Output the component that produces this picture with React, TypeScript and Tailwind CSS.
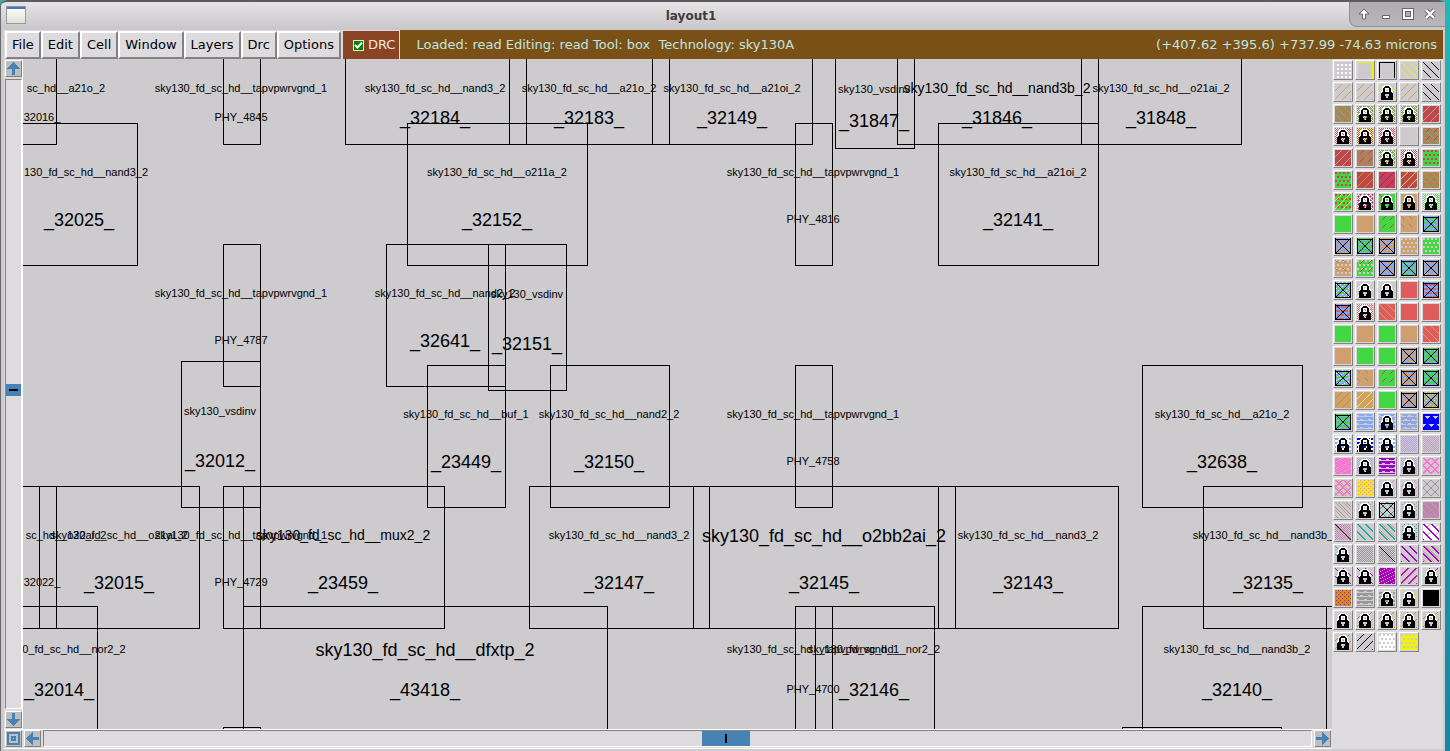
import React from "react";

/* ---------- layout canvas data ---------- */

type Box = [x1: number, y1: number, x2: number, y2: number];
type Size = "s" | "m" | "l";
type Label = [cx: number, cy: number, text: string, size: Size];

const BOXES: Box[] = [
  [-5, -9, 33, 85],
  [200, -9, 237, 85],
  [322, -9, 503, 85],
  [486, -9, 646, 85],
  [629, -9, 789, 85],
  [812, -9, 891, 89],
  [874, -9, 1075, 85],
  [1058, -9, 1218, 85],
  [-5, 64, 114, 206],
  [384, 64, 564, 206],
  [772, 64, 809, 206],
  [915, 64, 1075, 206],
  [200, 185, 237, 327],
  [363, 185, 482, 327],
  [465, 185, 543, 331],
  [158, 302, 237, 448],
  [404, 306, 482, 448],
  [527, 306, 646, 448],
  [772, 306, 809, 448],
  [1119, 306, 1279, 448],
  [-5, 427, 33, 569],
  [16, 427, 176, 569],
  [200, 427, 237, 569],
  [220, 427, 421, 569],
  [506, 427, 686, 569],
  [670, 427, 932, 569],
  [915, 427, 1095, 569],
  [1180, 427, 1361, 569],
  [-5, 547, 74, 689],
  [220, 547, 584, 689],
  [772, 547, 809, 689],
  [792, 547, 911, 689],
  [1119, 547, 1320, 689],
  [1303, 547, 1400, 689],
  [200, 668, 237, 810],
  [1099, 668, 1258, 810],
];

const LABELS: Label[] = [
  [43, 30, "sc_hd__a21o_2", "s"],
  [19, 59, "32016_", "s"],
  [218, 30, "sky130_fd_sc_hd__tapvpwrvgnd_1", "s"],
  [218, 59, "PHY_4845", "s"],
  [412, 30, "sky130_fd_sc_hd__nand3_2", "s"],
  [412, 59, "_32184_", "l"],
  [566, 30, "sky130_fd_sc_hd__a21o_2", "s"],
  [566, 59, "_32183_", "l"],
  [709, 30, "sky130_fd_sc_hd__a21oi_2", "s"],
  [709, 59, "_32149_", "l"],
  [851, 31, "sky130_vsdinv", "s"],
  [851, 62, "_31847_", "l"],
  [974, 29, "sky130_fd_sc_hd__nand3b_2", "m"],
  [974, 59, "_31846_", "l"],
  [1138, 30, "sky130_fd_sc_hd__o21ai_2", "s"],
  [1138, 59, "_31848_", "l"],
  [63, 114, "130_fd_sc_hd__nand3_2", "s"],
  [56, 161, "_32025_", "l"],
  [474, 114, "sky130_fd_sc_hd__o211a_2", "s"],
  [474, 161, "_32152_", "l"],
  [790, 114, "sky130_fd_sc_hd__tapvpwrvgnd_1", "s"],
  [790, 161, "PHY_4816", "s"],
  [995, 114, "sky130_fd_sc_hd__a21oi_2", "s"],
  [995, 161, "_32141_", "l"],
  [218, 235, "sky130_fd_sc_hd__tapvpwrvgnd_1", "s"],
  [218, 282, "PHY_4787", "s"],
  [422, 235, "sky130_fd_sc_hd__nand2_2", "s"],
  [422, 282, "_32641_", "l"],
  [504, 236, "sky130_vsdinv", "s"],
  [504, 285, "_32151_", "l"],
  [197, 353, "sky130_vsdinv", "s"],
  [197, 402, "_32012_", "l"],
  [443, 356, "sky130_fd_sc_hd__buf_1", "s"],
  [443, 403, "_23449_", "l"],
  [586, 356, "sky130_fd_sc_hd__nand2_2", "s"],
  [586, 403, "_32150_", "l"],
  [790, 356, "sky130_fd_sc_hd__tapvpwrvgnd_1", "s"],
  [790, 403, "PHY_4758", "s"],
  [1199, 356, "sky130_fd_sc_hd__a21o_2", "s"],
  [1199, 403, "_32638_", "l"],
  [43, 477, "sc_hd__o22ai_2", "s"],
  [19, 524, "32022_", "s"],
  [96, 477, "sky130_fd_sc_hd__o21ai_2", "s"],
  [96, 524, "_32015_", "l"],
  [218, 477, "sky130_fd_sc_hd__tapvpwrvgnd_1", "s"],
  [218, 524, "PHY_4729", "s"],
  [320, 476, "sky130_fd_sc_hd__mux2_2", "m"],
  [320, 524, "_23459_", "l"],
  [596, 477, "sky130_fd_sc_hd__nand3_2", "s"],
  [596, 524, "_32147_", "l"],
  [801, 477, "sky130_fd_sc_hd__o2bb2ai_2", "l"],
  [801, 524, "_32145_", "l"],
  [1005, 477, "sky130_fd_sc_hd__nand3_2", "s"],
  [1005, 524, "_32143_", "l"],
  [1240, 477, "sky130_fd_sc_hd__nand3b_", "s"],
  [1245, 524, "_32135_", "l"],
  [51, 591, "0_fd_sc_hd__nor2_2", "s"],
  [36, 631, "_32014_", "l"],
  [402, 591, "sky130_fd_sc_hd__dfxtp_2", "l"],
  [402, 631, "_43418_", "l"],
  [790, 591, "sky130_fd_sc_hd__tapvpwrvgnd_1", "s"],
  [790, 631, "PHY_4700", "s"],
  [851, 591, "sky130_fd_sc_hd__nor2_2", "s"],
  [851, 631, "_32146_", "l"],
  [1214, 591, "sky130_fd_sc_hd__nand3b_2", "s"],
  [1214, 631, "_32140_", "l"],
];

const LABEL_SIZE: Record<Size, string> = {
  s: "pb-0.5 text-[11px]",
  m: "text-[14px]",
  l: "text-[18px]",
};

function LayoutCanvas() {
  return (
    <div className="relative min-w-0 flex-1 overflow-hidden bg-[#cdcbce] font-['Liberation_Sans',Arial,sans-serif] text-black">
      {BOXES.map(([x1, y1, x2, y2], i) => (
        <div
          key={i}
          className="absolute border border-black"
          style={{ left: x1, top: y1, width: x2 - x1 + 1, height: y2 - y1 + 1 }}
        />
      ))}
      {LABELS.map(([cx, cy, text, size], i) => (
        <span
          key={i}
          className={`absolute -translate-x-1/2 -translate-y-1/2 leading-5 whitespace-nowrap ${LABEL_SIZE[size]}`}
          style={{ left: cx, top: cy }}
        >
          {text}
        </span>
      ))}
    </div>
  );
}

/* ---------- layer palette ---------- */

const COLORS: Record<string, string> = {
  _: "#cdcbce",
  W: "#ffffff",
  K: "#000000",
  Y: "#f4f400",
  T: "#cf9f70",
  N: "#ae8060",
  G: "#43d843",
  R: "#be4650",
  S: "#df5c5c",
  B: "#80a8ff",
  U: "#0000ff",
  L: "#b8a0dc",
  P: "#ff70d0",
  V: "#a000c8",
  M: "#d0009c",
  A: "#989898",
  E: "#20a8a0",
  O: "#c89600",
};

const mod = (a: number, n: number) => ((a % n) + n) % n;

/* 16x16 stipple functions, one letter for each kind of fill */
const STIPPLES: Record<string, (x: number, y: number) => boolean> = {
  b: (x, y) => mod(x - y, 8) === 0,
  B: (x, y) => mod(x - y, 8) < 2,
  i: (x, y) => mod(x - y, 8) === 3,
  f: (x, y) => mod(x + y, 8) === 6,
  F: (x, y) => mod(x + y, 8) > 5,
  e: (x, y) => mod(x - y, 8) === 0 && y % 8 < 3,
  g: (x, y) => mod(x + y, 8) === 6 && y % 8 < 4,
  G: (x, y) => mod(x + y, 8) > 5 && y % 8 < 3,
  d: (x, y) => x % 4 > 1 && y % 4 > 1,
  D: (x, y) => (x + (y % 8 > 3 ? 2 : 0)) % 4 < 2 && y % 4 < 2,
  c: (x, y) => (x + y) % 2 === 0,
  s: (x, y) => (x % 4 === 1 && y % 4 === 2) || (x % 4 === 3 && y % 4 === 0),
  w: (x, y) => y % 4 === 2 || (y % 4 === 1 && (x + y) % 8 < 3),
  v: (x, y) => y % 4 > 1 && (x + (y > 7 ? 4 : 0)) % 8 !== 5,
  h: (x, y) => mod(x - y, 8) === 0 || mod(x + y, 8) === 7,
  H: (x, y) => mod(x - y, 8) < 2 || mod(x + y, 8) > 5,
  x: (x, y) => x === 0 || y === 1 || x === 15 || y === 15 || x === y || x + y === 15,
  k: (x, y) => x === y,
  t: (x, y) => y % 8 > 1 && y % 8 < 6 && Math.abs(mod(x + (y > 7 ? 4 : 0), 8) - 4) < 5 - (y % 8),
  r: (x, y) => y === 0 || x === 0 || x === 15,
  n: (x, y) => (x * 5 + y * 3) % 7 === 0,
};

const LOCK = [
  "................",
  ".....WWWWWW.....",
  "....WWKKKKWW....",
  "...WWKKKKKKWW...",
  "...WKKWWWWKKW...",
  "...WKKW..WKKW...",
  "...WKKW..WKKW...",
  "..WWKKWWWWKKWW..",
  "..WKKKKKKKKKKW..",
  "..KKKKKKKKKKKK..",
  "..KKKK....KKKK..",
  "..KKKK....KKKK..",
  "..KKKKK..KKKKK..",
  "..KKKKK..KKKKK..",
  "..KKKKKKKKKKKK..",
  "..KKKKKKKKKKKK..",
];

/*
 * One entry per layer: a background colour, then pairs of stipple and colour.
 * A trailing "#" marks a locked layer.
 */
const LAYERS: string[] = [
  "_ dW", "_ rY", "_ rK", "_ bY", "_ bK",
  "_ fT", "_ fT", "_ bY #", "_ fT", "_ bK",
  "N bG", "W cN sG #", "W cN sG #", "W cN sG #", "R fT",
  "W cR #", "W cR sY #", "W cR #", "_", "N bG gR",
  "R fT", "N gR", "W cN sG #", "W cR #", "G DR",
  "G DR gN", "R fO", "R fM", "R fY", "N bG fO",
  "G DR fY", "W cN sM #", "G eR #", "T eG #", "W cG #",
  "G", "T", "G gR", "T eN", "B vG xK",
  "B wT xK", "G wB xK", "T vB xK", "T D_", "G D_",
  "T D_ eN", "G D_ gR", "B vT xK", "B wG xK", "B wT xK",
  "B vG sW xK", "_ fW #", "_ #", "S", "B vS xK",
  "B vS gN xK", "W cS #", "S bT", "S", "S",
  "G", "T", "G", "T", "S bT",
  "T", "G", "G", "T wB xK", "G wB xK",
  "B vG nW xK", "T eN", "G gR", "T vB xK", "G wB xK",
  "T fO", "T fY", "G", "T wB xK", "B wT sY xK",
  "G wB xK", "B w_", "B w_ #", "B w_ iT", "U t_",
  "W vB #", "W vU #", "W vB #", "_ cL", "_ cL bT",
  "P n_", "_ cL #", "V w_", "_ cL #", "_ HP",
  "_ HP iT", "Y n_ sP", "_ gP #", "_ fP #", "_ hA",
  "_ bT iA", "_ sA #", "_ hE xK", "_ sA #", "A hP sP",
  "A c_ sP kK", "_ BE", "_ BE iT", "_ sE #", "W BV G_",
  "_ eE #", "_ cA", "_ cA kK", "_ BV", "_ BV iT",
  "_ bV #", "_ bV #", "V sM n_", "_ FM", "_ gM #",
  "O nA sM", "A w_", "_ vA #", "_ bY #", "K",
  "_ #", "_ fO #", "_ fO #", "_ fO #", "_ fO #",
  "_ fO #", "_ fK", "W D_", "Y D_",
];

function pixels(test: (x: number, y: number) => boolean): string {
  let d = "";
  for (let y = 0; y < 16; y++) {
    for (let x = 0; x < 16; x++) {
      if (test(x, y)) d += `M${x} ${y}h1v1h-1z`;
    }
  }
  return d;
}

const STIPPLE_PATHS: Record<string, string> = Object.fromEntries(
  Object.entries(STIPPLES).map(([name, test]) => [name, pixels(test)]),
);
const LOCK_BLACK = pixels((x, y) => LOCK[y][x] === "K");
const LOCK_WHITE = pixels((x, y) => LOCK[y][x] === "W");

function LayerTile({ spec }: { spec: string }) {
  const [bg, ...layers] = spec.split(" ");
  return (
    <svg viewBox="0 0 16 16" className="size-4" shapeRendering="crispEdges" aria-hidden="true">
      <rect width="16" height="16" fill={COLORS[bg]} />
      {layers.map((l, i) =>
        l === "#" ? (
          <g key={i}>
            <path d={LOCK_WHITE} fill="#fff" />
            <path d={LOCK_BLACK} fill="#000" />
          </g>
        ) : (
          <path key={i} d={STIPPLE_PATHS[l[0]]} fill={COLORS[l[1]]} />
        ),
      )}
    </svg>
  );
}

function LayerPalette() {
  return (
    <div className="grid shrink-0 grid-cols-5 content-start gap-0.5 bg-[#dddbde] py-px pr-0.5 pl-px">
      {LAYERS.map((spec, i) => (
        <button
          key={i}
          type="button"
          aria-label={`Layer ${i + 1}`}
          className="flex size-5 items-center justify-center border border-t-white border-r-[#828182] border-b-[#828182] border-l-white bg-[#d6d4d7]"
        >
          <LayerTile spec={spec} />
        </button>
      ))}
    </div>
  );
}

/* ---------- scroll bars ---------- */

const ARROWS = {
  up: "M6 0h1v1h1v1h1v1h1v1h1v1h1v1h1v1H8v6H5V7H0V6h1V5h1V4h1V3h1V2h1V1h1z",
  down: "M5 0h3v6h5v1h-1v1h-1v1h-1v1H9v1H8v1H7v1H6v-1H5v-1H4v-1H3V9H2V8H1V7H0V6h5z",
  left: "M0 6h1V5h1V4h1V3h1V2h1V1h1V0h1v5h6v3H7v5H6v-1H5v-1H4v-1H3V9H2V8H1V7H0z",
  right: "M13 6h-1V5h-1V4h-1V3H9V2H8V1H7V0H6v5H0v3h6v5h1v-1h1v-1h1v-1h1V9h1V8h1V7h1z",
  zoom: "M0 0h13v13H0zM2 2v9h9V2zM4 4h5v5H4zM6 6v1h1V6z",
};

function ArrowButton({ kind, label }: { kind: keyof typeof ARROWS; label: string }) {
  return (
    <button
      type="button"
      aria-label={label}
      className="flex size-[17px] shrink-0 items-center justify-center border border-t-white border-r-[#828182] border-b-[#828182] border-l-white bg-[#bebebe]"
    >
      <svg viewBox="0 0 13 13" className="size-[13px]" shapeRendering="crispEdges" aria-hidden="true">
        <path d={ARROWS[kind]} fill="#4682b4" fillRule="evenodd" />
      </svg>
    </button>
  );
}

const SUNKEN = "border border-t-[#828182] border-l-[#828182] border-r-white border-b-white";

function VerticalScroll() {
  return (
    <div className="flex w-[19px] shrink-0 flex-col gap-0.5 border-r border-white bg-[#dddbde] py-px pl-px">
      <ArrowButton kind="up" label="Scroll up" />
      <div className={`flex w-[17px] flex-1 flex-col ${SUNKEN}`}>
        <div className="grow-[304]" />
        <div className="flex h-3 items-center justify-center bg-[#4682b4]">
          <div className="h-0.5 w-[9px] bg-black" />
        </div>
        <div className="grow-[312]" />
      </div>
      <ArrowButton kind="down" label="Scroll down" />
    </div>
  );
}

function HorizontalScroll() {
  return (
    <div className="flex h-5 shrink-0 items-start gap-0.5 border-y border-white bg-[#dddbde] px-px">
      <ArrowButton kind="zoom" label="Zoom to full view" />
      <ArrowButton kind="left" label="Scroll left" />
      <div className={`flex h-[17px] flex-1 ${SUNKEN}`}>
        <div className="grow-[658]" />
        <div className="flex w-12 items-center justify-center bg-[#4682b4]">
          <div className="h-[9px] w-0.5 bg-black" />
        </div>
        <div className="grow-[561]" />
      </div>
      <ArrowButton kind="right" label="Scroll right" />
    </div>
  );
}

/* ---------- title bar and menu ---------- */

function TitleBar() {
  const control = "flex size-[22px] items-center justify-center";
  return (
    <header className="flex h-[30px] shrink-0 items-start rounded-t-md border-t-2 border-[#5c5c5c] bg-linear-to-b from-[#e6e4e6] to-[#c8c6c8]">
      <div className="w-8 pt-1 pl-[5px]">
        <div className="h-[18px] w-5 border border-[#999] border-t-[#7d97c5] bg-linear-to-b from-white to-[#dde0d6]">
          <div className="h-0.5 bg-[#4a74b4]" />
        </div>
      </div>
      <h1 className="flex-1 pt-1.5 text-center text-[12px] leading-4 font-bold text-[#3c3c3c]">layout1</h1>
      <div className="flex h-[25px] w-24 items-center justify-end rounded-bl-lg border-b border-l border-[#909090] bg-linear-to-b from-[#adabad] to-[#b9b7b9] pr-1">
        <button type="button" aria-label="Shade" className={control}>
          <svg viewBox="0 0 12 12" className="size-3">
            <path d="M6 1 11 6H7.500V11H4.500V6H1Z" fill="#fff" stroke="#666" strokeWidth="1" />
          </svg>
        </button>
        <button type="button" aria-label="Minimize" className={control}>
          <svg viewBox="0 0 12 12" className="size-3">
            <path d="M2.500 7.500h7v3h-7z" fill="#fff" stroke="#666" />
          </svg>
        </button>
        <button type="button" aria-label="Maximize" className={control}>
          <svg viewBox="0 0 12 12" className="size-3" fill="none">
            <path d="M2 2h8v8H2z" stroke="#666" strokeWidth="4" />
            <path d="M2 2h8v8H2z" stroke="#fff" strokeWidth="2" />
          </svg>
        </button>
        <button type="button" aria-label="Close" className={control}>
          <svg viewBox="0 0 12 12" className="size-3">
            <path d="m2 2 8 8M10 2l-8 8" stroke="#666" strokeWidth="4" />
            <path d="m2 2 8 8M10 2l-8 8" stroke="#fff" strokeWidth="2.400" />
          </svg>
        </button>
      </div>
    </header>
  );
}

const MENUS = ["File", "Edit", "Cell", "Window", "Layers", "Drc", "Options"];

function MenuBar() {
  return (
    <div className="flex h-[29px] shrink-0 items-stretch bg-[#dddbde] text-[13px] leading-5 whitespace-nowrap">
      <nav className="flex pt-px pl-px">
        {MENUS.map((m) => (
          <button
            key={m}
            type="button"
            className="border-2 border-t-white border-r-[#828182] border-b-[#828182] border-l-white bg-[#dddbde] px-[5px] text-black"
          >
            {m}
          </button>
        ))}
      </nav>
      <label className="relative ml-0.5 flex items-center gap-1 border-t border-r border-[#dddbde] bg-[#8b4423] pr-1 pl-2.5 text-[#f0e8e0]">
        <input type="checkbox" defaultChecked className="peer sr-only" />
        <span className="flex size-[11px] items-center justify-center border border-[#e8e4dc] bg-[#008000]">
          <svg viewBox="0 0 9 9" className="size-[9px]" fill="none" aria-hidden="true">
            <path d="M1 4 3.500 6.500 8 1.500" stroke="#fff" strokeWidth="2" />
          </svg>
        </span>
        DRC
      </label>
      <div className="flex flex-1 items-center justify-between bg-[#7a5017] pr-1.5 pl-4 text-[#bfe6e0]">
        <span className="whitespace-pre">Loaded: read Editing: read Tool: box  Technology: sky130A</span>
        <span>(+407.62 +395.6) +737.99 -74.63 microns</span>
      </div>
    </div>
  );
}

export default function App() {
  return (
    <div className="flex h-screen min-h-[680px] bg-linear-to-b from-[#28b4b4] to-[#1287a8] pr-[5px] font-['DejaVu_Sans',Verdana,sans-serif]">
      <div className="flex min-w-0 flex-1 flex-col rounded-t-md border-l border-[#6a6a6a] bg-[#cdcbce]">
        <TitleBar />
        <main className="mr-0.5 mb-0.5 ml-[3px] flex min-h-0 flex-1 flex-col">
          <MenuBar />
          <div className="flex min-h-0 flex-1">
            <div className="flex min-w-0 flex-1 flex-col">
              <div className="flex min-h-0 flex-1">
                <VerticalScroll />
                <LayoutCanvas />
              </div>
              <HorizontalScroll />
            </div>
            <LayerPalette />
          </div>
        </main>
      </div>
    </div>
  );
}
